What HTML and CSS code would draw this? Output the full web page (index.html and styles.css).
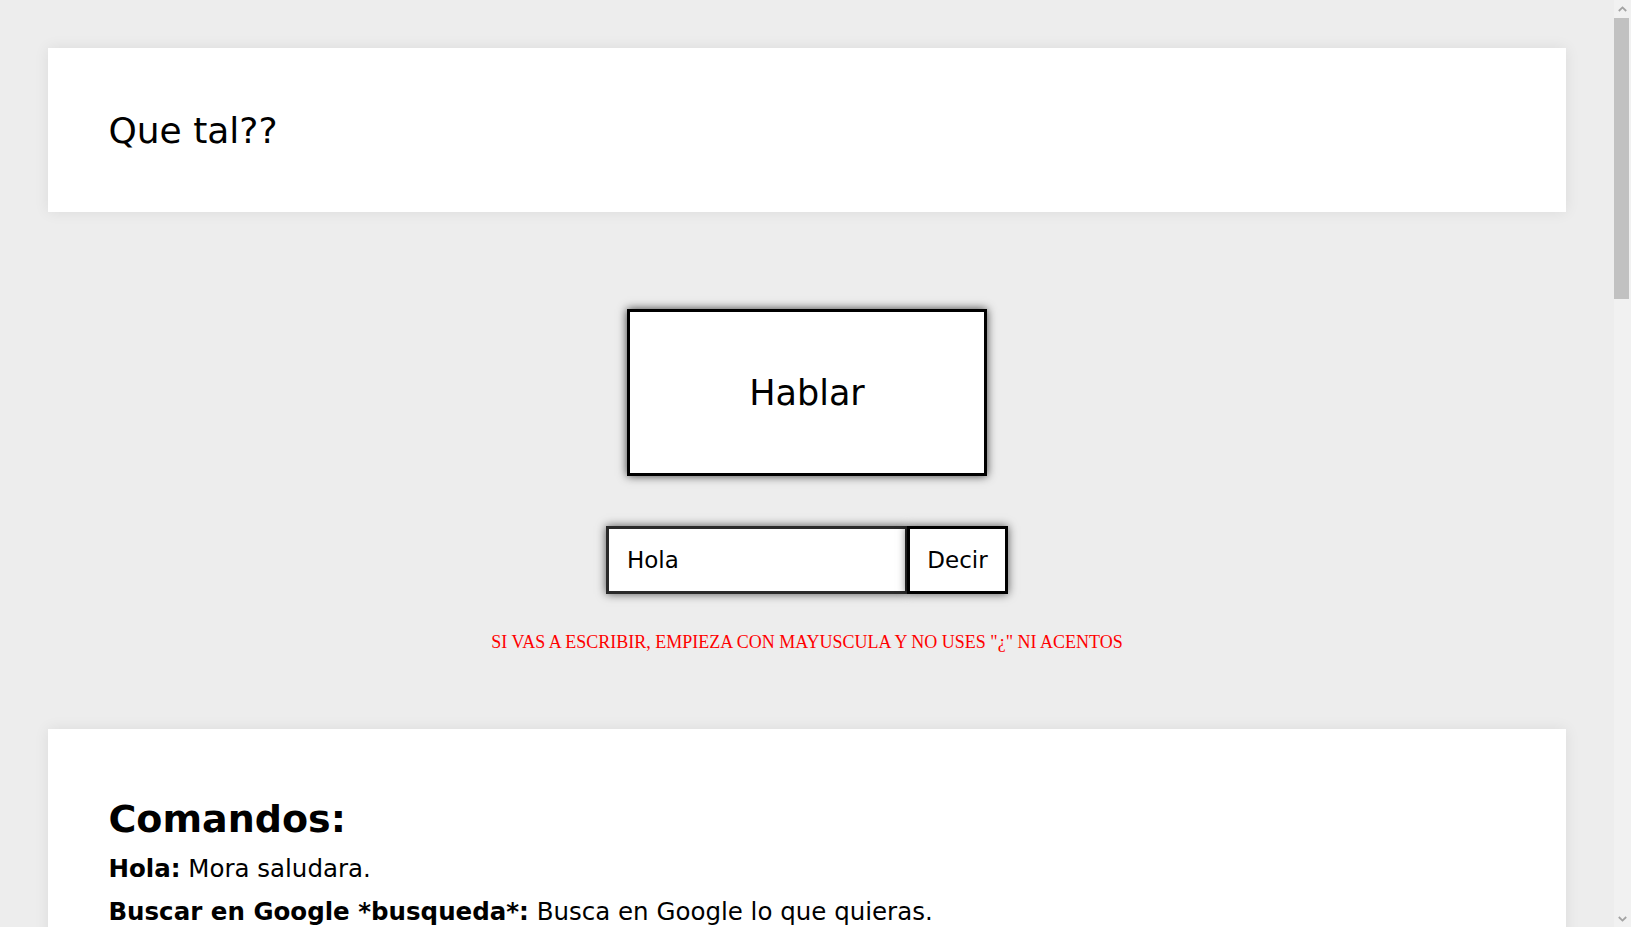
FILE: index.html
```html
<!DOCTYPE html>
<html lang="es">
<head>
<meta charset="utf-8">
<title>Mora</title>
<link rel="stylesheet" href="styles.css">
</head>
<body>
<div class="page">
  <header class="card header">
    <h2 class="title">Que tal??</h2>
  </header>

  <section class="controls">
    <button class="talk-btn" type="button">Hablar</button>
    <form class="say-row">
      <input class="say-input" type="text" value="Hola">
      <button class="say-btn" type="button">Decir</button>
    </form>
    <p class="warning">SI VAS A ESCRIBIR, EMPIEZA CON MAYUSCULA Y NO USES "¿" NI ACENTOS</p>
  </section>

  <section class="card commands">
    <h1 class="commands-title">Comandos:</h1>
    <p class="cmd"><b>Hola:</b> Mora saludara.</p>
    <p class="cmd"><b>Buscar en Google *busqueda*:</b> Busca en Google lo que quieras.</p>
  </section>
</div>
<aside class="scrollbar" aria-hidden="true">
  <div class="sb-arrow">
    <svg width="9" height="6" viewBox="0 0 9 6"><path d="M0.8 5 L4.5 1.4 L8.2 5" fill="none" stroke="#a3a3a3" stroke-width="1.8"/></svg>
  </div>
  <div class="sb-track">
    <div class="sb-thumb"></div>
  </div>
  <div class="sb-arrow">
    <svg width="9" height="6" viewBox="0 0 9 6"><path d="M0.8 1 L4.5 4.6 L8.2 1" fill="none" stroke="#a3a3a3" stroke-width="1.8"/></svg>
  </div>
</aside>
</body>
</html>
```

FILE: styles.css
```css
html, body {
  margin: 0;
  padding: 0;
}

body {
  display: flex;
  align-items: flex-start;
  background: #ededed;
  font-family: "DejaVu Sans", "Liberation Sans", sans-serif;
  color: #000;
}

.page {
  flex: 1;
  min-width: 0;
  display: flex;
  flex-direction: column;
  align-items: center;
  padding: 48px 0 0;
  height: 927px;
  overflow: hidden;
  box-sizing: border-box;
}

.card {
  width: 94%;
  box-sizing: border-box;
  background: #fff;
  box-shadow: 0 0 14px rgba(0, 0, 0, 0.08);
  padding: 0 60px;
  flex: none;
}

.header {
  height: 164px;
  display: flex;
  align-items: center;
}

.title {
  margin: 0;
  font-size: 36px;
  font-weight: normal;
}

.controls {
  display: flex;
  flex-direction: column;
  align-items: center;
  padding-top: 97px;
  padding-bottom: 76px;
  flex: none;
}

.talk-btn {
  width: 360px;
  height: 167px;
  box-sizing: border-box;
  border: 3px solid #000;
  background: #fff;
  box-shadow: 0 0 9px rgba(0, 0, 0, 0.75);
  font-family: inherit;
  font-size: 35px;
  color: #000;
  padding: 0;
}

.say-row {
  display: flex;
  margin: 50px 0 0;
}

.say-input {
  width: 301px;
  height: 68px;
  box-sizing: border-box;
  border: 3px solid #2a2a2a;
  border-right-width: 2px;
  background: #fff;
  box-shadow: 0 0 9px rgba(0, 0, 0, 0.65);
  padding: 0 18px;
  font-family: inherit;
  font-size: 23px;
  color: #000;
  outline: none;
}

.say-btn {
  width: 101px;
  height: 68px;
  box-sizing: border-box;
  border: 3px solid #000;
  background: #fff;
  box-shadow: 0 0 9px rgba(0, 0, 0, 0.65);
  font-family: inherit;
  font-size: 23px;
  color: #000;
  padding: 0;
}

.warning {
  margin: 38px 0 0;
  font-family: "Liberation Serif", "Times New Roman", serif;
  font-size: 18px;
  color: #ff0000;
}

.commands {
  padding-top: 68px;
  padding-bottom: 60px;
}

.commands-title {
  margin: 0 0 13px;
  font-size: 38px;
  font-weight: bold;
}

.cmd {
  margin: 0 0 14px;
  font-size: 24.5px;
  line-height: 29px;
}

.scrollbar {
  position: sticky;
  top: 0;
  flex: none;
  width: 17px;
  height: 927px;
  background: #f1f1f1;
  display: flex;
  flex-direction: column;
}

.sb-arrow {
  height: 17px;
  display: flex;
  align-items: center;
  justify-content: center;
  flex: none;
}

.sb-track {
  flex: 1;
  padding: 1px 2px 0 0;
}

.sb-thumb {
  height: 281px;
  background: #c1c1c1;
}
```
